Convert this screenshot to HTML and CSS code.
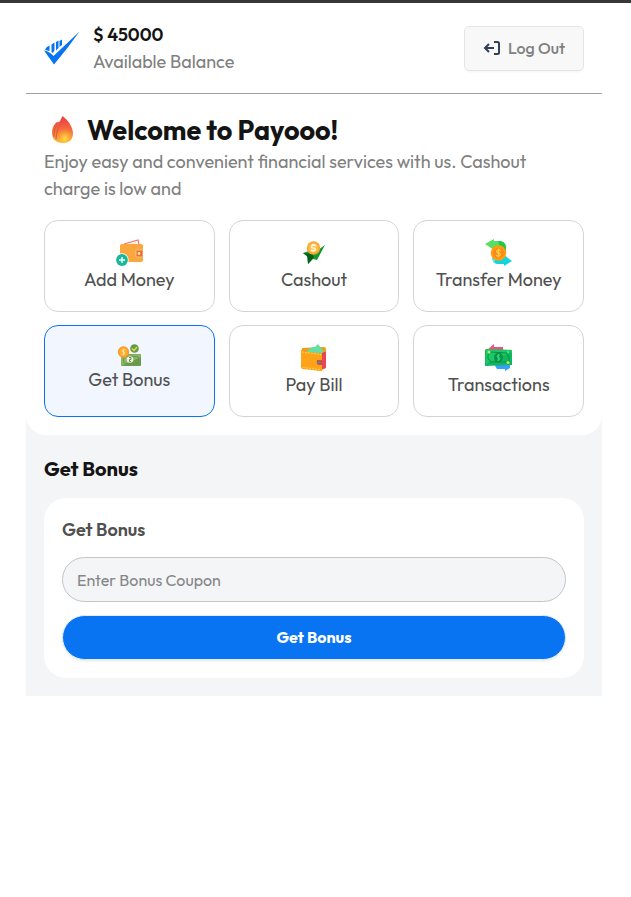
FILE: index.html
```html
<!DOCTYPE html>
<html lang="en">
<head>
<meta charset="utf-8">
<meta name="viewport" content="width=device-width, initial-scale=1">
<title>Payooo</title>
<link rel="stylesheet" href="styles.css">
</head>
<body>
<div class="app">
  <header class="topbar">
    <div class="account">
      <svg class="logo" viewBox="0 0 36 36" aria-hidden="true">
        <g fill="#0874f2">
          <path d="M0 20.500Q5 21 9.500 26 18 18 35.500 1.500 24 18 10 34.500Z"/>
          <path d="M1 19.500Q2.500 16.500 5.500 15.500V21Q3 20.500 1 19.500Z"/>
          <path d="M7.500 14.500 10.500 12.500V20L9 23 7.500 22Z"/>
          <path d="M12 12 14.500 10.500V18L12 20.500Z"/>
          <path d="M15.500 11 18 9.500V15L15.500 17Z"/>
        </g>
      </svg>
      <div>
        <p class="amount">$ 45000</p>
        <p class="muted">Available Balance</p>
      </div>
    </div>
    <button class="logout" type="button">
      <svg class="logout-icon" viewBox="0 0 18 18" aria-hidden="true">
        <path d="M11 3H14.500Q16 3 16 4.500V13.500Q16 15 14.500 15H11M11 9H2M6 5 2 9 6 13" fill="none" stroke="#334155" stroke-width="2"/>
      </svg>
      Log Out
    </button>
  </header>

  <main>
    <section class="intro">
      <h1 class="welcome">
        <svg class="flame" viewBox="0 0 36 36" aria-hidden="true">
          <defs>
            <linearGradient id="fire" x1="0" y1="0" x2="0" y2="1">
              <stop offset="0" stop-color="#ee3948"/>
              <stop offset=".55" stop-color="#f5713c"/>
              <stop offset="1" stop-color="#ffbd38"/>
            </linearGradient>
            <radialGradient id="glow" cx=".55" cy=".8" r=".6">
              <stop offset="0" stop-color="#ffe13c"/>
              <stop offset="1" stop-color="#ff973b" stop-opacity="0"/>
            </radialGradient>
          </defs>
          <path d="M18.500 4C24 8 29 15 29 21.500 29 28 24.500 31 19 31 12 31 8 27 8 20.500 8 16 10 11.500 14 9.500L13.500 12Q16.500 9 18.500 4Z" fill="url(#fire)"/>
          <path d="M15 10Q9 17 10 25M19 9Q12 17 12 27" fill="none" stroke="#d95534" stroke-width="1"/>
          <path d="M24 12Q29 18 27 25 24 30 19 30 12 29 12.500 23 13 18 19 15 22 13 24 12Z" fill="url(#glow)"/>
        </svg>
        Welcome to Payooo!
      </h1>
      <p class="muted">Enjoy easy and convenient financial services with us. Cashout charge is low and</p>

      <div class="services">
        <button class="service" type="button">
          <svg class="icon" viewBox="0 0 27 27" aria-hidden="true">
            <path d="M8 5 22 1 23 6" fill="#fff" stroke="#f07065" stroke-width="1.200"/>
            <path d="M10 5.500 20 3V6Z" fill="#fde3df"/>
            <rect x="4" y="5" width="23" height="18" rx="2" fill="#f9a73e"/>
            <path d="M20 11H27V18H20Z" fill="#e86f32" stroke="#ffc17a"/>
            <circle cx="23" cy="14.500" r="1.400" fill="#ffe0b4"/>
            <circle cx="6" cy="21" r="6.700" fill="#fff"/>
            <circle cx="6" cy="21" r="5.900" fill="#15b89a"/>
            <path d="M6 18V24M3 21H9" stroke="#fff" stroke-width="1.400"/>
          </svg>
          Add Money
        </button>
        <button class="service" type="button">
          <svg class="icon" viewBox="0 0 27 27" aria-hidden="true">
            <path d="M3 14 9 12 18 11 25 6 17 21 13 20 8 25V18Z" fill="#16992b"/>
            <path d="M3 14 12 15 14 18 8 25 7 17Z" fill="#076018"/>
            <circle cx="13.500" cy="9" r="6.700" fill="#f9a62d"/>
            <circle cx="13.500" cy="9" r="5" fill="#ffbd4c"/>
            <path d="M16 7Q13 5 11.800 6.800 11 8.500 13.500 9 16 9.500 15 11 13 12.500 11 11" fill="none" stroke="#fff8dc" stroke-width="1.700"/>
          </svg>
          Cashout
        </button>
        <button class="service" type="button">
          <svg class="icon" viewBox="0 0 27 27" aria-hidden="true">
            <path d="M0 5 9 0V2H16Q21 3 21 13H17L14 9H9V11Z" fill="#55df66"/>
            <path d="M13 2Q21 2 21 8V14L15 8Z" fill="#20c94b"/>
            <path d="M7 14 10 19H19V16L27 22 19 27V25H12Q7 24 7 17Z" fill="#12d4df"/>
            <path d="M7 14 10 19V24Q7 22 7 17Z" fill="#52ecf0"/>
            <circle cx="13.500" cy="14" r="7.700" fill="#ff9d0b"/>
            <circle cx="13.500" cy="14" r="5.300" fill="#ff8421"/>
            <path d="M16 12Q14 10 12 11.500 11 13.500 13.500 14 16 14.500 15 16.500 13 18 11 16M13.500 9.500V18.500" fill="none" stroke="#ffcd37" stroke-width="1.300"/>
          </svg>
          Transfer Money
        </button>
        <button class="service service-active" type="button" aria-pressed="true">
          <svg class="icon icon-short" viewBox="0 0 27 22" aria-hidden="true">
            <rect x="5" y="10" width="20" height="12" rx="1" fill="#6b9c4d"/>
            <path d="M5 11 25 10V13L5 22Z" fill="#8bb565"/>
            <rect x="7.500" y="12.500" width="15" height="7" rx="2" fill="none" stroke="#639350" stroke-width=".8"/>
            <circle cx="14" cy="15.500" r="3.300" fill="#f1f4da"/>
            <path d="M13 13.500H15V15.500H13.500V17.500H15" fill="none" stroke="#5e8c42"/>
            <circle cx="18.500" cy="4.500" r="4.300" fill="#639b4e"/>
            <path d="M16 4.500 18 6.500 21 3" fill="none" stroke="#ecd438" stroke-width="1.500"/>
            <circle cx="7.500" cy="8" r="5.700" fill="#ff9b20"/>
            <circle cx="7.500" cy="8" r="4" fill="#ffad38"/>
            <path d="M9.500 6Q6.500 4.500 6 7 7.500 8 9 9 8.500 11.500 5.500 10M7.500 4.500V11.500" fill="none" stroke="#ffe39b" stroke-width=".9"/>
          </svg>
          Get Bonus
        </button>
        <button class="service" type="button">
          <svg class="icon" viewBox="0 0 27 27" aria-hidden="true">
            <path d="M2 4 24 3Q26 3 26 6V24L20 27 2 23Z" fill="#ed9d18"/>
            <path d="M22 8H26V24L22 25Z" fill="#e94452"/>
            <path d="M6 8 12 3 15 3 18 0 24 8 20 10Z" fill="#65dda3"/>
            <path d="M1 5Q2 8 6 8L20 9Q22 9 22 11V27L3 25Q1 25 1 23Z" fill="#ffa319"/>
            <path d="M2 8 21 10.500M3 23.500 20 25.500" stroke="#ffd149" stroke-dasharray="2 1"/>
            <path d="M17 16H22V21H18Q16 19 17 16Z" fill="#c6533b"/>
            <circle cx="19" cy="18.500" r="1.600" fill="#73799a"/>
          </svg>
          Pay Bill
        </button>
        <button class="service" type="button">
          <svg class="icon" viewBox="0 0 27 27" aria-hidden="true">
            <path d="M2 6 9 0V3H18V8H5Z" fill="#f64a82"/>
            <path d="M9 20H25V24L20 27V25H12Z" fill="#369fff"/>
            <path d="M1 5 27 6V21L0 22V6Z" fill="#10b660"/>
            <path d="M1 5 27 6V8L1 20Z" fill="#1dc767"/>
            <path d="M5 8 22 9V11L24 12V18H5V16L3 15V11Z" fill="none" stroke="#079449"/>
            <ellipse cx="13.500" cy="13.500" rx="4.500" ry="4.800" fill="#079449"/>
            <path d="M15 11Q12 10 12 13L15 14Q15 17 12 16M13.500 10V17" fill="none" stroke="#37d36c"/>
            <circle cx="4" cy="8" r="1.500" fill="#b4ef58"/>
            <circle cx="23" cy="18.500" r="1.500" fill="#b4ef58"/>
            <circle cx="23" cy="8" r="1" fill="#63e66d"/>
          </svg>
          Transactions
        </button>
      </div>
    </section>

    <section class="bonus">
      <h2 class="bonus-title">Get Bonus</h2>
      <form class="bonus-card">
        <label class="bonus-label" for="coupon">Get Bonus</label>
        <input class="coupon" id="coupon" type="text" placeholder="Enter Bonus Coupon">
        <button class="submit" type="button">Get Bonus</button>
      </form>
    </section>
  </main>
</div>
</body>
</html>
```
FILE: styles.css
```css
* {
  box-sizing: border-box;
}

body {
  margin: 0;
  padding-right: 3px;
  border-top: 3px solid #383637;
  background: #fff;
  color: #141414;
  font-family: Outfit, Lato, "Liberation Sans", sans-serif;
  font-size: 18px;
  line-height: 27px;
}

h1,
h2,
p {
  margin: 0;
}

button,
input {
  font: inherit;
}

.app {
  max-width: 576px;
  margin: 0 auto;
  background: #f4f5f7;
}

.topbar {
  display: flex;
  align-items: center;
  justify-content: space-between;
  padding: 18px;
  border-bottom: 1px solid #9ca3af;
  background: #fff;
}

.account {
  display: flex;
  align-items: center;
  gap: 13px;
}

.logo {
  width: 36px;
  height: 36px;
}

.amount {
  font-weight: 600;
}

.muted {
  color: #808080;
}

.logout {
  display: flex;
  align-items: center;
  gap: 7px;
  height: 45px;
  padding: 0 18px;
  border: 1px solid #e5e5e5;
  border-radius: 5px;
  background: #f8f8f8;
  box-shadow: 0 2px 3px -1px #0000000d;
  color: #808080;
  font-size: 16px;
  font-weight: 500;
}

.logout-icon {
  width: 18px;
  height: 18px;
}

.intro {
  padding: 18px;
  border-radius: 0 0 20px 20px;
  background: #fff;
}

.welcome {
  display: flex;
  align-items: center;
  gap: 7px;
  font-size: 27px;
  font-weight: 700;
  line-height: 36px;
}

.flame {
  width: 36px;
  height: 36px;
}

.services {
  display: grid;
  grid-template-columns: repeat(3, 1fr);
  gap: 13px 14px;
  margin-top: 18px;
}

.service {
  display: flex;
  flex-direction: column;
  align-items: center;
  justify-content: flex-start;
  padding: 18px 4px;
  border: 1px solid #d1d5db;
  border-radius: 14px;
  background: #fff;
  color: #505050;
}

.service-active {
  border-color: #0874f2;
  background: #f2f7ff;
}

.icon {
  width: 27px;
  height: 27px;
}

.icon-short {
  height: 22px;
}

.bonus {
  padding: 18px;
}

.bonus-title {
  margin-bottom: 14px;
  font-size: 20px;
  font-weight: 700;
  line-height: 31px;
}

.bonus-card {
  display: flex;
  flex-direction: column;
  padding: 18px;
  border-radius: 22px;
  background: #fff;
}

.bonus-label {
  margin-bottom: 14px;
  color: #505050;
  font-weight: 600;
}

.coupon {
  width: 100%;
  height: 45px;
  padding: 0 14px;
  border: 1px solid #c4c5c8;
  border-radius: 23px;
  background: #f4f5f7;
  color: #505050;
  font-size: 16px;
}

.coupon::placeholder {
  color: #858688;
  opacity: 1;
}

.submit {
  height: 45px;
  margin-top: 13px;
  border: 1px solid #e1edff;
  border-radius: 23px;
  background: #0874f2;
  box-shadow: 0 2px 3px -1px #0000001a;
  color: #fff;
  font-size: 16px;
  font-weight: 700;
}
```
